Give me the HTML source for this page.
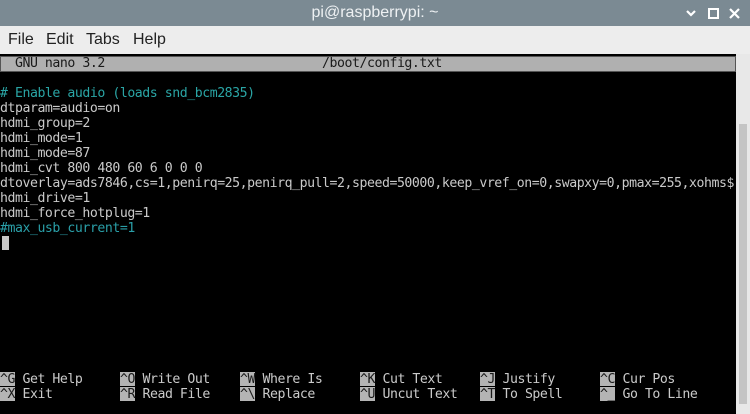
<!DOCTYPE html>
<html><head><meta charset="utf-8"><style>
*{margin:0;padding:0;box-sizing:border-box}
body{width:750px;height:414px;overflow:hidden;background:#000;position:relative;font-family:"Liberation Sans",sans-serif}
#title{position:absolute;left:0;top:0;width:750px;height:26px;background:#7b8a93;color:#eef1f3;font-size:16px;text-align:center;line-height:26px}
#menu{position:absolute;left:0;top:26px;width:750px;height:28px;background:#ededed;color:#222;font-size:16px;line-height:28px}
#menu span{position:absolute;top:0}
.r{position:absolute;left:0;white-space:pre;font-family:"DejaVu Sans Mono","Liberation Mono",monospace;font-size:13.2px;letter-spacing:-0.45px;line-height:15px;color:#cacaca}
.c{color:#2aa5a5}
.hl{color:#1a1a1a}
.bx{position:absolute;width:15px;height:14px;background-color:#b4b4b4}
#sb{position:absolute;left:736px;top:54px;width:14px;height:360px;background:#e8e8e8}
</style></head><body>
<div id="title">pi@raspberrypi: ~</div>
<svg style="position:absolute;left:684px;top:8px" width="60" height="12">
<path d="M3 3l4 4 4-4" stroke="#fff" stroke-width="2.2" fill="none"/>
<rect x="25" y="1" width="9" height="9" stroke="#fff" stroke-width="2" fill="none"/>
<path d="M46 1l9 9M55 1l-9 9" stroke="#fff" stroke-width="2.2"/>
</svg>
<div id="menu"><span style="left:8px">File</span><span style="left:46px">Edit</span><span style="left:86px">Tabs</span><span style="left:133px">Help</span></div>
<div style="position:absolute;left:0;top:56px;width:736px;height:16px;background:#b0b0b0;border:1px solid #555"></div>
<div class="r" style="top:56px;color:#1a1a1a">  GNU nano 3.2                             /boot/config.txt</div>
<div class="r" style="top:86px"><span class="c"># Enable audio (loads snd_bcm2835)</span>
dtparam=audio=on
hdmi_group=2
hdmi_mode=1
hdmi_mode=87
hdmi_cvt 800 480 60 6 0 0 0
dtoverlay=ads7846,cs=1,penirq=25,penirq_pull=2,speed=50000,keep_vref_on=0,swapxy=0,pmax=255,xohms$
hdmi_drive=1
hdmi_force_hotplug=1
<span class="c" style="color:#2a9fa8">#max_usb_current=1</span></div>
<div style="position:absolute;left:2px;top:236px;width:7px;height:14px;background:#c8c8c8"></div>
<div class="bx" style="left:0;top:372px"></div><div class="bx" style="left:0;top:387px"></div>
<div class="bx" style="left:120px;top:372px"></div><div class="bx" style="left:120px;top:387px"></div>
<div class="bx" style="left:240px;top:372px"></div><div class="bx" style="left:240px;top:387px"></div>
<div class="bx" style="left:360px;top:372px"></div><div class="bx" style="left:360px;top:387px"></div>
<div class="bx" style="left:480px;top:372px"></div><div class="bx" style="left:480px;top:387px"></div>
<div class="bx" style="left:600px;top:372px"></div><div class="bx" style="left:600px;top:387px"></div>
<div class="r" style="top:372px;left:0"><span class="hl">^G</span> Get Help
<span class="hl">^X</span> Exit</div>
<div class="r" style="top:372px;left:120px"><span class="hl">^O</span> Write Out
<span class="hl">^R</span> Read File</div>
<div class="r" style="top:372px;left:240px"><span class="hl">^W</span> Where Is
<span class="hl">^\</span> Replace</div>
<div class="r" style="top:372px;left:360px"><span class="hl">^K</span> Cut Text
<span class="hl">^U</span> Uncut Text</div>
<div class="r" style="top:372px;left:480px"><span class="hl">^J</span> Justify
<span class="hl">^T</span> To Spell</div>
<div class="r" style="top:372px;left:600px"><span class="hl">^C</span> Cur Pos
<span class="hl">^_</span> Go To Line</div>
<div id="sb"><div style="position:absolute;left:3px;top:70px;width:8px;height:280px;background:#c4c4c4"></div></div>
</body></html>
